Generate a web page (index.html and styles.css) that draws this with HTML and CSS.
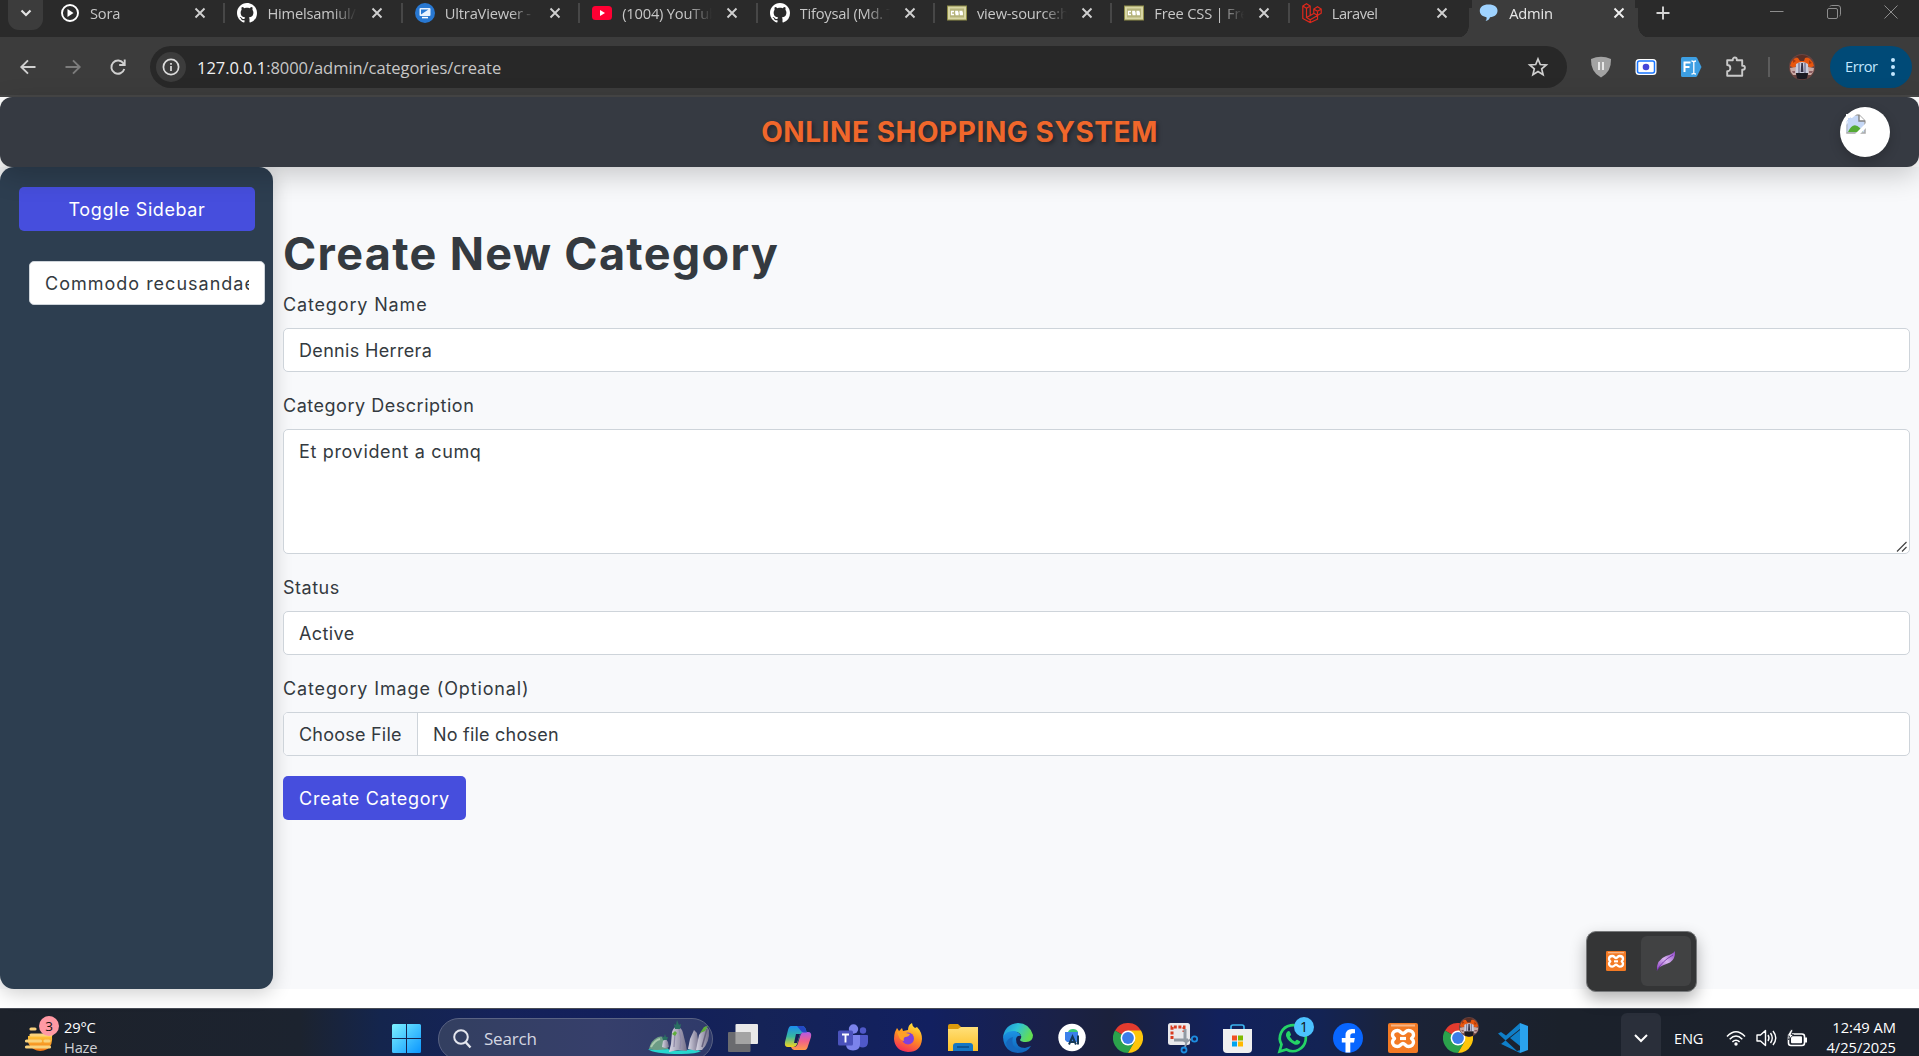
FILE: index.html
```
<!DOCTYPE html>
<html lang="en">
<head>
<meta charset="utf-8">
<title>Admin</title>
<link rel="stylesheet" href="styles.css">
</head>
<body>
<svg class="defs" width="0" height="0" aria-hidden="true">
  <defs>
    <linearGradient id="win" x1="0" y1="0" x2="1" y2="1"><stop offset="0" stop-color="#7df1ff"/><stop offset="1" stop-color="#0a96ff"/></linearGradient>
    <linearGradient id="cpA" x1="0" y1="0" x2="0" y2="1"><stop offset="0" stop-color="#1b8df0"/><stop offset=".5" stop-color="#37b8a0"/><stop offset="1" stop-color="#f5d51e"/></linearGradient>
    <linearGradient id="cpB" x1="0" y1="0" x2="0" y2="1"><stop offset="0" stop-color="#b05be8"/><stop offset=".5" stop-color="#f0608a"/><stop offset="1" stop-color="#ff9a4a"/></linearGradient>
    <linearGradient id="fox" x1=".7" y1="0" x2=".3" y2="1"><stop offset="0" stop-color="#ffe63b"/><stop offset=".45" stop-color="#ff9420"/><stop offset="1" stop-color="#f5285a"/></linearGradient>
    <linearGradient id="folder" x1="0" y1="0" x2="0" y2="1"><stop offset="0" stop-color="#ffe07a"/><stop offset="1" stop-color="#fdc026"/></linearGradient>
    <linearGradient id="edgeA" x1="0" y1="0" x2="1" y2=".4"><stop offset="0" stop-color="#1a8fdc"/><stop offset=".5" stop-color="#2fc3d6"/><stop offset="1" stop-color="#62dd55"/></linearGradient>
    <linearGradient id="edgeB" x1="0" y1="0" x2="0" y2="1"><stop offset="0" stop-color="#1c94e4"/><stop offset="1" stop-color="#0f62b8"/></linearGradient>
    <linearGradient id="sun" x1="0" y1="0" x2="0" y2="1"><stop offset="0" stop-color="#ffc53a"/><stop offset="1" stop-color="#f07414"/></linearGradient>
    <linearGradient id="feather" x1="0" y1="1" x2="1" y2="0"><stop offset="0" stop-color="#8a3cc0"/><stop offset=".5" stop-color="#d7b4ee"/><stop offset="1" stop-color="#8e44c8"/></linearGradient>
    <linearGradient id="rock" x1="0" y1="0" x2="1" y2="0"><stop offset="0" stop-color="#d8d6e4"/><stop offset="1" stop-color="#76728c"/></linearGradient>
    <symbol id="close" viewBox="0 0 12 12"><path d="M1.5 1.5 10.5 10.5M10.5 1.5 1.5 10.5" stroke="currentColor" stroke-width="1.9" fill="none"/></symbol>
    <symbol id="github" viewBox="0 0 16 16"><path fill="#fff" d="M8 0C3.58 0 0 3.58 0 8c0 3.54 2.29 6.53 5.47 7.59.4.07.55-.17.55-.38 0-.19-.01-.82-.01-1.49-2.01.37-2.53-.49-2.69-.94-.09-.23-.48-.94-.82-1.13-.28-.15-.68-.52-.01-.53.63-.01 1.08.58 1.23.82.72 1.21 1.87.87 2.33.66.07-.52.28-.87.51-1.07-1.78-.2-3.64-.89-3.64-3.95 0-.87.31-1.59.82-2.15-.08-.2-.36-1.02.08-2.12 0 0 .67-.21 2.2.82.64-.18 1.32-.27 2-.27s1.36.09 2 .27c1.53-1.04 2.2-.82 2.2-.82.44 1.1.16 1.92.08 2.12.51.56.82 1.27.82 2.15 0 3.07-1.87 3.75-3.65 3.95.29.25.54.73.54 1.48 0 1.07-.01 1.93-.01 2.2 0 .21.15.46.55.38A8.01 8.01 0 0 0 16 8c0-4.42-3.58-8-8-8z"/></symbol>
    <symbol id="css" viewBox="0 0 20 20"><rect y="2.5" width="20" height="15" fill="#8f8d48"/><rect x="1" y="3.5" width="18" height="13" fill="#d8d6a4"/><rect x="3" y="5.500" width="14" height="9" fill="#b5b37a"/><path d="M7 8.500H4.500v3H7M11.200 8.500H8.800V10h2.200v1.500H8.500M15.500 8.500h-2.400V10h2.200v1.500h-2.500" stroke="#fff" stroke-width="1.300" fill="none"/></symbol>
    <symbol id="chrome" viewBox="0 0 30 30"><path d="M15 15 2 7.500A15 15 0 0 1 28 7.500Z" fill="#e33b2e"/><path d="M2 7.500A15 15 0 0 0 15 30l6.500-11.200L15 15Z" fill="#2ba24c"/><path d="M28 7.500A15 15 0 0 1 15 30l6.500-11.250L15 7.500Z" fill="#fdc60b"/><circle cx="15" cy="15" r="7.400" fill="#fff"/><circle cx="15" cy="15" r="5.900" fill="#3b7de9"/></symbol>
    <symbol id="xampp" viewBox="0 0 30 30"><rect width="30" height="30" rx="2" fill="#f37a24"/><rect x="3" y="1.500" width="24" height="2" fill="#f9b583"/><path d="M9.500 7.500c3 0 3.500 3 5.500 3s2.500-3 5.500-3 5 2 5 4.500-2 2.700-2 3.500 2 1 2 3.500-2 4.500-5 4.500-3.500-3-5.500-3-2.500 3-5.500 3-5-2-5-4.500 2-2.700 2-3.500-2-1-2-3.500 2-4.500 5-4.500Z" fill="none" stroke="#fff" stroke-width="3.400"/><path d="M12 15.500h6" stroke="#fff" stroke-width="3.200"/></symbol>
    <symbol id="person" viewBox="0 0 26 26"><circle cx="13" cy="13" r="13" fill="#6b4440"/><path d="M1 12A12.200 12.200 0 0 1 25 12l-4 2-3-3H8l-3 3Z" fill="#e8560e"/><path d="M6 3q7-4 14 0l-4 1-1 3h-4L9 4Z" fill="#5a2f26"/><path d="M4 5l3 2-3 2ZM20 6l3 3-3 1Z" fill="#a83a10"/><path d="M1 14l6-1v8H4Q1 18 1 14ZM25 14l-6-1v8h3q3-3 3-7Z" fill="#c9a9a4"/><path d="M3 17h3v2H4ZM20 17h4l-1 2h-3Z" fill="#8d5e62"/><path d="M7 10q6-4 12 0l.5 9h-13Z" fill="#c9cbdc"/><path d="M10 9v10M16 9v10" stroke="#6c6a88" stroke-width="1.200"/><path d="M12.300 9h1.600l.6 9h-2.800Z" fill="#343044"/><path d="M7 19h12l-1 5.500q-5 1.500-10 0Z" fill="#1b1a22"/></symbol>
  </defs>
</svg>

<div class="screen">
  <div class="tabstrip">
    <div class="tabsearch"><svg width="12" height="8" viewBox="0 0 12 8"><path d="m1.500 1.500 4.500 4.500 4.500-4.500" fill="none" stroke="#e3e3e3" stroke-width="2.200"/></svg></div>
    <div class="tab first"><svg class="fav" viewBox="0 0 20 20"><circle cx="10" cy="10" r="8" fill="none" stroke="#fff" stroke-width="1.900"/><path d="M7.500 6v8l6-4Z" fill="#fff"/></svg><span>Sora</span><svg class="x"><use href="#close"/></svg></div>
    <div class="tab"><svg class="fav"><use href="#github"/></svg><span>Himelsamiul/o</span><svg class="x"><use href="#close"/></svg></div>
    <div class="tab"><svg class="fav" viewBox="0 0 20 20"><circle cx="10" cy="10" r="10" fill="#2878d2"/><rect x="4.500" y="5" width="11" height="8" rx="1" fill="#e9f3ff"/><path d="M6 6.500h7.500L6 11.500Z" fill="#2878d2"/><path d="M7 14.600h6" stroke="#fff" stroke-width="1.500"/></svg><span>UltraViewer -</span><svg class="x"><use href="#close"/></svg></div>
    <div class="tab"><svg class="fav" viewBox="0 0 20 20"><rect y="3" width="20" height="14" rx="3.500" fill="#ff0033"/><path d="M8 7v6l5-3Z" fill="#fff"/></svg><span>(1004) YouTub</span><svg class="x"><use href="#close"/></svg></div>
    <div class="tab"><svg class="fav"><use href="#github"/></svg><span>Tifoysal (Md. T</span><svg class="x"><use href="#close"/></svg></div>
    <div class="tab"><svg class="fav"><use href="#css"/></svg><span>view-source:h</span><svg class="x"><use href="#close"/></svg></div>
    <div class="tab"><svg class="fav"><use href="#css"/></svg><span>Free CSS | Fre</span><svg class="x"><use href="#close"/></svg></div>
    <div class="tab"><svg class="fav" viewBox="0 0 20 20"><path d="M.8 3 4.500.8 8.200 3v9.500l3.600-2V6l3.700-2.200L19.200 6v4.200l-3.700 2.200v3.800l-7.300 3.300-7.400-4ZM.8 3l3.700 2.200L8.200 3M4.500 5.200v9.300l3.700 2.200 7.300-4.300M4.500 14.500l3.700-2M11.800 6l3.700 2.200L19.200 6M15.500 8.200v4M11.800 10.300l3.700 2M8.200 16.700v2.800" fill="none" stroke="#e0281c" stroke-width="1.200"/></svg><span class="tight">Laravel</span><svg class="x"><use href="#close"/></svg></div>
    <div class="tab active"><svg class="fav" viewBox="0 0 20 20"><path d="M9.500 1.500c6 0 9 2.500 9 6.300 0 3.500-2.800 6.200-7.500 6.500-.5 2-2 3.300-4.500 3.700 1-1 1.300-2.200 1-3.800C3 13.500.8 11 .8 7.800.8 4 3.800 1.500 9.500 1.500Z" fill="#9fd3ff"/></svg><span>Admin</span><svg class="x"><use href="#close"/></svg></div>
    <svg class="plus" width="14" height="14" viewBox="0 0 14 14"><path d="M7 .5v13M.5 7h13" stroke="#d5d5d5" stroke-width="1.900"/></svg>
    <div class="winbtns">
      <svg width="14" height="14" viewBox="0 0 14 14"><path d="M0 6.500h13.500" stroke="#8d8d8d"/></svg>
      <svg width="14" height="14" viewBox="0 0 14 14"><rect x=".5" y="3.500" width="10" height="10" rx="1.500" fill="none" stroke="#8d8d8d"/><path d="M3 1.500Q3.300.5 4.500.5H11Q13.500.5 13.500 3v6.500q0 1.200-1 1.500" fill="none" stroke="#8d8d8d"/></svg>
      <svg width="14" height="14" viewBox="0 0 14 14"><path d="m.5.5 13 13M13.500.5l-13 13" stroke="#8d8d8d"/></svg>
    </div>
  </div>

  <div class="toolbar">
    <svg class="nav" viewBox="0 0 16 16"><path d="M15.500 8H1.500M8 1.300 1.300 8 8 14.700" fill="none" stroke="#d0d0d0" stroke-width="1.900"/></svg>
    <svg class="nav" viewBox="0 0 16 16"><path d="M.5 8h14M8 1.300 14.700 8 8 14.700" fill="none" stroke="#7c7c7c" stroke-width="1.900"/></svg>
    <svg class="nav" viewBox="0 0 16 16"><path d="M14.300 10A6.600 6.600 0 1 1 13.500 4.500L14.500 6M14.700.5V6H9.200" fill="none" stroke="#d0d0d0" stroke-width="1.900"/></svg>
    <div class="omnibox">
      <div class="siteinfo"><svg width="18" height="18" viewBox="0 0 18 18"><circle cx="9" cy="9" r="7.600" fill="none" stroke="#dcdcdc" stroke-width="1.700"/><path d="M9 8v5M9 5v1.800" stroke="#dcdcdc" stroke-width="1.700"/></svg></div>
      <span class="url"><b>127.0.0.1</b>:8000/admin/categories/create</span>
      <svg class="star" width="20" height="20" viewBox="0 0 20 20"><path d="m10 2 2.300 5.500 6 .5-4.600 3.900 1.400 5.800L10 14.600l-5.100 3.100 1.400-5.800L1.700 8l6-.5Z" fill="none" stroke="#d0d0d0" stroke-width="1.700"/></svg>
    </div>
    <div class="exts">
      <svg viewBox="0 0 22 22"><path d="M1 3Q6 .8 11 .8T21 3Q21.500 16 11 21.500.5 16 1 3Z" fill="#a3a3a3"/><path d="M9 6v8M13 6v8" stroke="#fff" stroke-width="1.500"/></svg>
      <svg viewBox="0 0 22 22"><rect x=".5" y="3" width="21" height="16" rx="3.500" fill="#fff"/><rect x="2.500" y="5" width="17" height="12" rx="2" fill="#fff" stroke="#1976ff" stroke-width="1.500"/><circle cx="11" cy="11" r="3.300" fill="#4546d8"/></svg>
      <svg viewBox="0 0 22 22"><path d="M2.500 1h13q1 0 1.500.8L21.500 11 17 20.200q-.5.8-1.500.8h-13Q1 21 1 19.500v-17Q1 1 2.500 1Z" fill="#3d9fe3"/><path d="M4.500 16V6.500h6M4.500 11h5" stroke="#fff" stroke-width="2" fill="none"/><path d="M11.500 5q2 0 2.300 1.200Q14 5 16 5M11.500 18q2 0 2.300-1.200Q14 18 16 18M13.800 6v11" stroke="#fff" stroke-width="1.300" fill="none"/></svg>
      <svg viewBox="0 0 22 22"><path d="M2.200 4.200h5.600V3.500a2 2 0 0 1 4 0v.7h5.400v5.600h.7a2 2 0 0 1 0 4h-.7v6H2.200v-4.500a3 3 0 0 0 0-6.300Z" fill="none" stroke="#c9c9c9" stroke-width="1.900" stroke-linejoin="round"/></svg>
    </div>
    <i class="tsep"></i>
    <svg class="profile"><use href="#person"/></svg>
    <div class="error"><span>Error</span><i></i></div>
  </div>

  <div class="page">
    <header class="topbar">
      <h2>ONLINE SHOPPING SYSTEM</h2>
      <div class="avatar"><svg width="20" height="20" viewBox="0 0 20 20"><path d="M1 1h12v6h6v12H1Z" fill="#c6d8f6"/><path d="M1 1h12l6 6v12H1V1" fill="none" stroke="#a9a9a9" stroke-width="1.500"/><path d="M13 1v6h6" fill="#fff" stroke="#808080" stroke-width="1.400"/><path d="M2 18q5-11 12-4l3 4Z" fill="#55ab35"/><path d="M9 20 20 9v5l-6 6ZM0 0h11L6 4H2v5L0 11Z" fill="#fff"/><path d="M1 18V7l4-3.500" stroke="#c6d8f6" fill="none"/></svg></div>
    </header>
    <div class="body">
      <aside class="sidebar">
        <button class="btn toggle">Toggle Sidebar</button>
        <div class="control side-input"><span>Commodo recusandae</span></div>
      </aside>
      <main class="content">
        <h1>Create New Category</h1>
        <label class="l-name">Category Name</label>
        <div class="control t-name">Dennis Herrera</div>
        <label class="l-desc">Category Description</label>
        <div class="control area t-desc">Et provident a cumq<svg class="grip" width="10" height="10" viewBox="0 0 10 10"><path d="m0 9.500 9.500-9.500M5 9.500 9.500 5" stroke="#444" stroke-width="1.200"/></svg></div>
        <label class="l-status">Status</label>
        <div class="control t-status">Active</div>
        <label class="l-image">Category Image (Optional)</label>
        <div class="control file"><span class="choose">Choose File</span><span class="nofile">No file chosen</span></div>
        <button class="btn create">Create Category</button>
      </main>
    </div>
    <div class="tray"><div><svg width="20" height="20"><use href="#xampp"/></svg></div><div class="hover"><svg width="20" height="20" viewBox="0 0 20 20"><path d="M1 19.500Q0 9 10 5q7-2 9-5 .5 8-5 11.500-8 3-11 5Z" fill="url(#feather)"/><path d="M1 19.500Q6 10 17 4" stroke="#6b2aa0" stroke-width=".8" fill="none"/></svg></div></div>
  </div>

  <div class="taskbar">
    <div class="weather">
      <div class="haze"><svg width="32" height="26" viewBox="0 0 32 26"><path d="M3 10h24q1 9-4.500 13-7.500 4-14 0Q4 20 3 16Z" fill="url(#sun)"/><path d="M6 3h4M6 9h20M1.500 15h14M20 15h4M1.500 21h23" stroke="#f9d27c" stroke-width="3.200" stroke-linecap="round"/></svg><em>3</em></div>
      <div class="wtext"><span>29°C</span><span class="dim">Haze</span></div>
    </div>
    <svg class="start" width="29" height="29" viewBox="0 0 29 29"><path d="M1.500 0H14v14H0V1.500Q0 0 1.500 0ZM15 0h12.500Q29 0 29 1.500V14H15ZM0 15h14v14H1.500Q0 29 0 27.500ZM15 15h14v12.500q0 1.500-1.500 1.500H15Z" fill="url(#win)"/></svg>
    <div class="search">
      <svg width="19" height="20" viewBox="0 0 19 20"><circle cx="8" cy="8" r="6.800" fill="none" stroke="#e4e6ee" stroke-width="2"/><path d="m12.500 13 5 5.500" stroke="#e4e6ee" stroke-width="2.400"/></svg>
      <span>Search</span>
      <svg class="scene" width="62" height="34" viewBox="0 0 62 34"><path d="M1 28q2-9 9-12 6-2 8 4l2 8-10 2Z" fill="#6d9c85"/><path d="M3 26q4-7 9-8" stroke="#a9c9ae" stroke-width="2" fill="none"/><path d="M0 28q8 2 20 0l4 2 14-1 8-1 7 2q-4 3-20 3-28 0-33-5Z" fill="#26d8cf"/><path d="m14 26 1-6 3-2 2 3 1 5-4 1Z" fill="url(#rock)"/><path d="m21 31 2-8 1-12q2-6 6-5 4 1 5 6l3 12 1 6-9-1Z" fill="url(#rock)"/><path d="m31 8 2 10-1 10M27 12l-1 14" stroke="#8f8aa8" stroke-width="1.200" fill="none"/><path d="m40 28 2-10 4-9 3 3 2 13-2 5Z" fill="url(#rock)"/><path d="m48 29 3-15 7-9 3 4q1 12-7 20Z" fill="url(#rock)"/><path d="m59 8-5 18" stroke="#68637f" stroke-width="1.500"/><path d="m27 8-1-5 2 1 1-5 2 5 2-1-1 5Z" fill="#2a6f62"/><path d="m52 12 4-6 4-1-3 5ZM24 13l3-3 2 2-2 3Z" fill="#5fae3c"/><path d="m15 19-1-3 2 0 1-3 1 3 2 0-1 3Z" fill="#2a6f62"/></svg>
    </div>
    <div class="apps">
      <svg viewBox="0 0 30 30"><rect x="7.500" y="1" width="22.500" height="20" rx="1" fill="#e9e9e9"/><rect y="9" width="22.500" height="20" rx="1" fill="#717171" fill-opacity=".93"/><path d="M7.500 9h15v12h-15Z" fill="#a4a4a4"/></svg>
      <svg viewBox="0 0 30 30"><path d="M8 3h11q3 0 4 4l.8 3h-4q-2.500 0-3.300 3l-2.500 8q-1 3-4 3H5q-4 0-3-5L5 7q1-4 3-4Z" fill="url(#cpA)"/><path d="M22 27H11q-2 0-3-3h3q3 0 4-4l2.500-8q1-3 4-3H25q4 0 3 5l-3 9q-1 4-3 4Z" fill="url(#cpB)"/><path d="M13 11h4l-3 9h-3Z" fill="#141f58"/><path d="M14 3h5q3 0 4 4l.8 2.500h-3q-2 0-3.500-2.500Z" fill="#2448c4"/></svg>
      <svg viewBox="0 0 30 30"><circle cx="15.500" cy="6" r="4.700" fill="#7b83eb"/><circle cx="25" cy="7.500" r="3.200" fill="#5059c9"/><path d="M20 12h9q1 0 1 1v6q0 5-5 5.500-5 0-5-5Z" fill="#5059c9"/><path d="M8 12h14v9q0 6.500-7 6.500T8 21Z" fill="#7b83eb"/><rect y="7.500" width="15" height="15" rx="1.500" fill="#4b53bc"/><path d="M4 11.500h7M7.500 11.500v8" stroke="#fff" stroke-width="1.900"/></svg>
      <svg viewBox="0 0 30 30"><path d="M2 9 4 5l2 3 3-3 1 3 5-1q0-5 4-7 0 3 3 5l2-1q5 5 5 12-1 13-14 13Q2 28 1 16q0-4 1-7Z" fill="url(#fox)"/><circle cx="15" cy="15.500" r="6" fill="#8040dc"/><path d="M4 9q5-2 9 1l4 1q-1 3-5 3-2 1-1 4-4-1-5-4Z" fill="#ffa028"/></svg>
      <svg viewBox="0 0 30 30"><path d="M0 3q0-2 2-2h8l4 4v5H0Z" fill="#dc9a0c"/><path d="M0 6h10l3-2h17v24H0Z" fill="url(#folder)"/><path d="M5 28v-5q0-3 3-3h14q3 0 3 3v5Z" fill="#1576c2"/><path d="M9 24h12" stroke="#0b4b84" stroke-width="1.500"/></svg>
      <svg viewBox="0 0 30 30"><path d="M15 0q11 0 15 12 0 7-7 7-5 0-6-2 3-4-1-7-7-4-16 4Q2 1 15 0Z" fill="url(#edgeA)"/><path d="M0 14q3-6 10-6 6 0 8 5-4-1-5 3 0 9 9 9l6-2q-4 7-13 7Q1 29 0 14Z" fill="url(#edgeB)"/><path d="M10 14q-3 10 8 15-13 1-15-9 2-5 7-6Z" fill="#1668bd"/></svg>
      <svg viewBox="0 0 30 30"><circle cx="14" cy="14.500" r="13.700" fill="#fff"/><path d="M10 9q1-3 5-3 4 0 5 3Z" fill="#38c878"/><path d="M7 9h13v10H9l-2-2Z" fill="#3b80ea"/><path d="m11 21.500 3.500-8 3.500 8M12.500 19h4M20 12.500v9" fill="none" stroke="#153a59" stroke-width="2"/></svg>
      <svg><use href="#chrome"/></svg>
      <svg viewBox="0 0 30 30"><rect width="22" height="22" rx="2.500" fill="#e9e9ec"/><path d="M4 16V4h12v5" fill="none" stroke="#d83b20" stroke-width="3" stroke-dasharray="3 1.600"/><path d="M17 6v13M6 17h14" stroke="#929aa3" stroke-width="3"/><path d="m17 20 6-4M19 18l-2 6" stroke="#929aa3" stroke-width="2"/><circle cx="26.500" cy="16" r="2.700" fill="none" stroke="#1d8de0" stroke-width="1.800"/><circle cx="16" cy="27" r="2.500" fill="none" stroke="#1d8de0" stroke-width="1.800"/></svg>
      <svg viewBox="0 0 30 30"><path d="M8 7V4q0-2 2-2h9q2 0 2 2v3" fill="none" stroke="#3cb4ee" stroke-width="1.700"/><path d="M0 6h29v20q0 4-4 4H4q-4 0-4-4Z" fill="#f0f0f0"/><path d="M9 12.500h5v5H9Z" fill="#f05022"/><path d="M15 12.500h5v5h-5Z" fill="#7fba00"/><path d="M9 18.500h5v5H9Z" fill="#00a4ef"/><path d="M15 18.500h5v5h-5Z" fill="#ffb900"/></svg>
      <div class="badged"><svg viewBox="0 0 30 30"><path d="M1.500 28.500 3.500 21.500A13 13 0 1 1 8.500 26.500Z" fill="none" stroke="#25d366" stroke-width="2.700"/><path d="M9 9q2-2 3 0l1 2.500q0 1-1.300 2 2 3.500 5.300 5 1.200-2 2.200-1.700l2.800 1.400q.8.500-.5 2.300-2 2-5 1Q10 18.500 8 13q-.4-2.500 1-4Z" fill="#25d366"/></svg><em>1</em></div>
      <svg viewBox="0 0 30 30"><circle cx="15" cy="15" r="15" fill="#0866ff"/><path d="M12.500 29.500V19.500H8.800V15h3.700v-2.500q0-6.500 6.500-6.500l3 .3v4h-2q-2.700 0-2.700 2.500V15h4.500l-.8 4.500h-3.700v10Z" fill="#fff"/></svg>
      <svg><use href="#xampp"/></svg>
      <div class="badged"><svg><use href="#chrome"/></svg><svg class="mini"><use href="#person"/></svg></div>
      <svg viewBox="0 0 30 30"><path d="M22 0 8 12.500 3 9 0 10.500 19 28l3-1V7l-10 8 10 8v7L0 19.500l3 1.500L22 6Z" fill="#0f7fc8"/><path d="m22 0 8 3v24l-8 3Z" fill="#2aa3ee"/></svg>
    </div>
    <div class="caret"><svg width="14" height="9" viewBox="0 0 14 9"><path d="m1 1 6 6 6-6" fill="none" stroke="#fff" stroke-width="2"/></svg></div>
    <span class="lang">ENG</span>
    <div class="status">
      <svg width="20" height="16" viewBox="0 0 20 16"><path d="M1 6.500q9-9.500 18 0M3.700 9.200q6.300-6.300 12.600 0M6.400 11.900q3.600-3.400 7.200 0" fill="none" stroke="#fff" stroke-width="1.500"/><circle cx="10" cy="14" r="1.700" fill="#fff"/></svg>
      <svg width="21" height="18" viewBox="0 0 21 18"><path d="M1 6h3.500L9.500 1.500v15L4.500 12H1Z" fill="none" stroke="#fff" stroke-width="1.400" stroke-linejoin="round"/><path d="M12 6q2 3 0 6M14.500 4q3.500 5 0 10M17 2q5.500 7 0 14" fill="none" stroke="#fff" stroke-width="1.400"/></svg>
      <svg width="21" height="17" viewBox="0 0 21 17"><rect x="1.500" y="4" width="16" height="11.500" rx="2.500" fill="none" stroke="#fff" stroke-width="1.600"/><rect x="4" y="6.300" width="11" height="7" rx="1" fill="#fff"/><path d="M18 7.500h2v5h-2Z" fill="#fff"/><path d="M4-.5 0 6h2.500L1.500 10l5-5.500H4L6 0Z" fill="#fff" stroke="#1d222d" stroke-width=".8"/></svg>
    </div>
    <div class="clock"><span>12:49 AM</span><span>4/25/2025</span></div>
  </div>
</div>
</body>
</html>
```
FILE: styles.css
```
* { box-sizing: border-box; }
body { margin: 0; background: #fff; font-family: "Open Sans", sans-serif; overflow: hidden; }
svg { display: block; flex: none; overflow: visible; }
.defs { position: absolute; }
.screen { width: 1919px; height: 1056px; display: flex; flex-direction: column; overflow: hidden; }

/* Browser tabs */
.tabstrip { height: 38px; flex: none; background: #2a2a2a; display: flex; align-items: flex-start; padding-left: 8px; }
.tabsearch { width: 35px; height: 30px; margin-right: 4px; background: #3c3c3c; border-radius: 0 0 11px 11px; display: flex; align-items: center; justify-content: center; padding-bottom: 4px; }
.tab { width: 177.4px; height: 26px; flex: none; display: flex; align-items: center; padding-left: 13px; color: #c7c7c7; font-size: 14.7px; letter-spacing: -.2px; position: relative; }
.tab::before { content: ""; position: absolute; left: -1px; top: 3px; width: 2px; height: 20px; background: #474747; }
.tab.first::before { display: none; }
.fav { width: 20px; height: 20px; }
.tab span { width: 91px; margin: 0 0 0 10px; line-height: 24px; overflow: hidden; white-space: nowrap; -webkit-mask-image: linear-gradient(90deg, #000 72%, transparent 99%); mask-image: linear-gradient(90deg, #000 72%, transparent 99%); }
.tab .tight { letter-spacing: -.5px; }
.x { width: 12px; height: 12px; margin-left: 13px; color: #d0d0d0; }
.tab.active { height: 38px; padding-bottom: 12px; color: #e8e8e8; z-index: 1; }
.tab.active::before { left: -9px; top: 0; width: 193px; height: 38px; z-index: -1; background:
  radial-gradient(circle at 0 0, transparent 11.500px, #3c3c3c 12px) 0 100% / 12px 12px no-repeat,
  radial-gradient(circle at 100% 0, transparent 11.500px, #3c3c3c 12px) 100% 100% / 12px 12px no-repeat,
  linear-gradient(#3c3c3c, #3c3c3c) 12px 8px / 169px 30px no-repeat,
  linear-gradient(#3c3c3c, #3c3c3c) 15px 0 / 163px 8px no-repeat; }
.tab.active .x { color: #efefef; }
.plus { margin: 6px 0 0 12px; }
.winbtns { display: flex; gap: 43px; margin: 5px 21px 0 auto; }

/* Toolbar */
.toolbar { height: 59px; flex: none; background: #3c3c3c; border-bottom: 2px solid #474747; display: flex; align-items: center; padding: 0 7px 7px 20px; box-shadow: 0 -1px #3c3c3c; }
.toolbar > * { margin-top: 7px; }
.nav { width: 16px; height: 16px; margin-right: 29px; }
.nav:nth-child(3) { margin-right: 24px; }
.omnibox { width: 1417px; height: 42px; background: #282828; border-radius: 21px; display: flex; align-items: center; padding: 0 19px 0 6px; }
.siteinfo { width: 30px; height: 30px; border-radius: 50%; background: #3c3c3c; display: flex; align-items: center; justify-content: center; }
.url { margin: 1px 0 0 11px; font-size: 16.5px; letter-spacing: -.05px; color: #c7c7c7; }
.url b { font-weight: 400; color: #f0f0f0; }
.star { margin-left: auto; }
.exts { display: flex; gap: 23px; margin-left: 23px; }
.exts svg { width: 22px; height: 22px; }
.tsep { width: 2px; height: 20px; margin-left: 21px; background: #5c5c5c; }
.profile { width: 26px; height: 26px; margin-left: 19px; }
.error { width: 82px; height: 42px; margin-left: 15px; border-radius: 21px; background: #004a77; color: #c2e7ff; font-size: 14.7px; letter-spacing: -.5px; display: flex; align-items: center; padding-left: 15px; }
.error span { margin-top: -2px; }
.error i { width: 4px; height: 4px; margin-left: 13px; border-radius: 50%; background: #c2e7ff; box-shadow: 0 -7px #c2e7ff, 0 7px #c2e7ff; }

/* Web page */
.page { height: 911px; flex: none; background: #fff; font-family: Inter, sans-serif; color: #343a40; font-size: 18px; position: relative; }
.topbar { height: 70px; background: #363a42; border-radius: 12px; box-shadow: 0 8px 28px rgba(0, 0, 0, .2); position: relative; z-index: 1; display: grid; grid-template-columns: 79px 1fr 79px; align-items: center; }
.topbar h2 { grid-column: 2; margin: 0; text-align: center; font-size: 28px; font-weight: 700; letter-spacing: .55px; line-height: 70px; color: #f0672b; text-shadow: 2px 2px 4px rgba(0, 0, 0, .4); }
.avatar { width: 50px; height: 50px; border-radius: 50%; background: #fff; padding: 7px 0 0 6px; box-shadow: 0 4px 12px rgba(0, 0, 0, .2); }
.body { height: 822px; display: flex; background: #f8f9fb; }
.sidebar { width: 273px; background: #2d3e50; border-radius: 14px; padding: 20px 18px 0 19px; box-shadow: 0 4px 20px rgba(0, 0, 0, .2), -20px 0 0 -8px #fff; }
.btn { height: 44px; border: 0; border-radius: 5px; background: #464edd; color: #fff; font: 400 18px Inter, sans-serif; padding: 0; display: block; }
.toggle { width: 236px; letter-spacing: .6px; }
.control { height: 44px; border: 1px solid #ced4da; border-radius: 5px; background: #fff; padding: 0 15px; line-height: 44px; white-space: nowrap; }
.side-input { width: 236px; margin: 30px 0 0 10px; letter-spacing: 1px; }
.side-input span { display: block; overflow: hidden; }
.content { flex: 1; padding: 58px 9px 0 10px; display: flex; flex-direction: column; }
h1 { margin: 0 0 8px; font-size: 45px; font-weight: 700; line-height: 58px; letter-spacing: 1.320px; }
label { display: block; height: 27px; line-height: 27px; margin-bottom: 10px; }
.content .control { margin-bottom: 20px; }
.l-name { letter-spacing: .85px; }
.l-desc { letter-spacing: .52px; }
.l-status { letter-spacing: .5px; }
.l-image { letter-spacing: .86px; }
.t-name { letter-spacing: .33px; }
.t-desc { letter-spacing: .65px; }
.t-status { letter-spacing: .4px; }
.content .area { height: 125px; position: relative; }
.grip { position: absolute; right: 2px; bottom: 1px; }
.content .file { display: flex; padding: 0; overflow: hidden; line-height: 43px; }
.choose { width: 134px; padding-left: 15px; background: #f8f9fb; border-right: 1px solid #ced4da; letter-spacing: .22px; }
.nofile { padding-left: 15px; letter-spacing: .22px; }
.create { width: 183px; letter-spacing: .72px; }

/* Overflow tray flyout */
.tray { position: absolute; left: 1586px; top: 834px; width: 111px; height: 61px; padding: 5px; display: flex; background: #343536; border: 1px solid #77797b; border-radius: 10px; box-shadow: 0 7px 16px rgba(0, 0, 0, .3); }
.tray div { width: 50px; height: 50px; margin: -1px 0 0 -1px; display: flex; align-items: center; justify-content: center; }
.tray .hover { background: #414243; border-radius: 6px; margin-left: 0; }

/* Taskbar */
.taskbar { height: 48px; flex: none; border-top: 1px solid #474b55; color: #fff; font-size: 14.7px; display: flex; background: linear-gradient(90deg, #1d222b 0, #1c232f 300px, #14254d 380px, #15225a 500px, #121f5c 640px, #152357 760px, #122060 930px, #1a2147 1060px, #1b213c 1110px, #12215c 1220px, #132354 1320px, #1b2338 1400px, #1b212b 1560px, #1b202b 100%); }
.weather { width: 392px; display: flex; padding-left: 25px; flex: none; }
.haze { width: 39px; height: 50px; padding-top: 17px; position: relative; }
.haze em { position: absolute; left: 14px; top: 7px; width: 20px; height: 20px; border-radius: 50%; background: #ff99a4; color: #111; font-style: normal; font-size: 13.500px; line-height: 20px; text-align: center; }
.wtext { display: flex; flex-direction: column; line-height: 20px; padding-top: 8px; letter-spacing: -.2px; }
.dim { color: #cfd1d5; }
.start { margin-top: 15px; }
.search { width: 275px; height: 42px; margin: 9px 0 0 17px; flex: none; border-radius: 21px; background: linear-gradient(90deg, #333f60, #363f6b 60%, #2f3a6a); border: 1px solid #5a6383; display: flex; align-items: center; padding-left: 14px; color: #d4d7e2; font-size: 17px; letter-spacing: -.2px; }
.search span { margin: -1px 0 0 12px; }
.search .scene { margin: -2px 2px 0 auto; }
.apps { display: flex; gap: 25px; margin: 14px 0 0 15px; height: 30px; }
.apps > *, .apps .badged > svg:first-child { width: 30px; height: 30px; }
.badged { position: relative; }
.badged em { position: absolute; left: 16px; top: -6px; width: 20px; height: 20px; border-radius: 50%; background: #4cc2ff; color: #111; font-style: normal; font-size: 14px; line-height: 20px; text-align: center; }
.mini { position: absolute; left: 16px; top: -6px; width: 20px; height: 20px; }
.caret { width: 40px; height: 50px; margin: 4px 0 0 93px; background: #2a2f3a; border-radius: 6px 6px 0 0; display: flex; justify-content: center; padding-top: 21px; flex: none; }
.lang { width: 30px; margin: 18px 0 0 13px; line-height: 22px; letter-spacing: -.2px; }
.status { display: flex; gap: 10px; margin: 0 0 0 22px; height: 58px; align-items: center; }
.clock { margin-left: auto; padding: 8px 23px 0 0; display: flex; flex-direction: column; line-height: 20px; text-align: right; white-space: nowrap; }
```
